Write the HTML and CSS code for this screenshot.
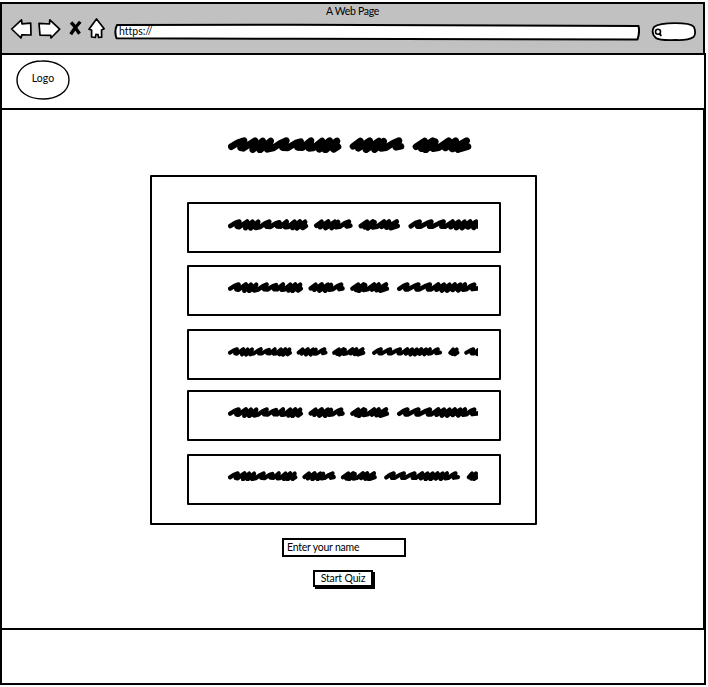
FILE: index.html
```html
<!DOCTYPE html>
<html lang="en">
<head>
<meta charset="utf-8">
<title>A Web Page</title>
<link rel="stylesheet" href="styles.css">
</head>
<body>
<svg class="defs" aria-hidden="true">
  <defs>
    <g id="scribble" fill="none" stroke="#000" stroke-width="20" stroke-linecap="round" stroke-linejoin="round">
      <path d="M10 29 L30 17 L48 11 L38 32 L46 34 L81 11 L74 38 L104 12 L96 39 L128 12 L118 37 L136 33 L157 19 L175 11 L164 32 L179 33 L204 18 L218 14 L209 31 L223 32 L249 11 L243 34 L256 33 L282 12 L274 37 L305 11 L292 39 L327 12 L317 37 L330 29"/>
      <path d="M375 28 L397 12 L391 34 L425 11 L414 38 L453 12 L440 38 L467 13 L459 34 L474 32 L496 18 L513 11 L504 31 L519 28"/>
      <path d="M564 29 L590 12 L580 35 L614 11 L593 39 L622 14 L615 35 L632 32 L662 11 L652 33 L683 11 L673 36 L716 11 L690 38 L720 29"/>
      <path d="M776 30 L796 17 L813 11 L804 32 L817 32 L845 17 L863 11 L854 32 L868 32 L897 17 L915 11 L906 32 L921 32 L953 11 L945 34 L979 12 L969 38 L1004 12 L993 38 L1028 11 L1018 35 L1053 12 L1043 37 L1074 11 L1066 34 L1080 32 L1101 17 L1116 11 L1107 31 L1128 28"/>
      <path d="M1181 29 L1197 12 L1193 35 L1216 12 L1206 37 L1220 28"/>
      <path d="M1266 29 L1288 17 L1304 11 L1295 32 L1306 33 L1334 12 L1325 36 L1352 11 L1344 34 L1365 20"/>
    </g>
  </defs>
</svg>
<div class="browser">
  <header class="toolbar">
    <div class="title">A Web Page</div>
    <div class="controls">
      <svg class="nav-icons" viewBox="0 0 98 24" fill="#fff" stroke="#000" stroke-width="1.7" stroke-linejoin="round">
        <path d="M1.7 12 L11.5 2.8 L12 6.8 L20.7 6.1 L21 18 L11.8 17.8 L11 21 Z"/>
        <path d="M29 6.3 L39.5 7 L39.8 2.8 L49.7 12.2 L41 21 L40.8 18.3 L30 18.2 Z"/>
        <path d="M61 5.5 L63.5 8 L69.5 16.8 M70.3 4.8 L65 11 L60.7 17.3" fill="none" stroke-width="3.3"/>
        <path d="M86.5 2 L94.2 11.7 L91.5 13 L91.7 20.2 L88.6 20.5 L88 17.5 L86 17.4 L85.3 20.5 L81.6 20 L81.6 13 L79 12.2 Z"/>
      </svg>
      <div class="address">
        <svg class="outline" viewBox="0 0 526 18" fill="#fff" stroke="#000" stroke-width="2" stroke-linejoin="round"><path d="M3 2 L180 1.7 L524.5 3 Q526 9 523.5 16.5 L180 15.8 L2.5 15.2 Q0 8 3 2Z"/></svg>
        <span class="url">https://</span>
      </div>
      <svg class="search" viewBox="0 0 46 20" fill="#fff" stroke="#000" stroke-width="1.8"><path d="M3 5 Q8 1.2 24 1.2 Q40 1.2 43 5 Q45.5 12 42.5 15 Q37 18.5 25 18 Q8 18.5 5 16 Q-.5 11 3 5Z"/><circle cx="7" cy="9.7" r="2.5" stroke-width="1.6"/><path d="M8.5 11.4 L10.2 14" stroke-width="2"/></svg>
    </div>
  </header>
  <nav class="site-header">
    <div class="logo"><svg class="outline" viewBox="0 0 54 40" fill="#fff" stroke="#000" stroke-width="1.4"><path d="M26 1 C39 .7 53 7 53 20 C53 33 39 39 27 39 C13 39 .8 32 1 20 C1 8 13 1 26 1Z"/></svg><span>Logo</span></div>
  </nav>
  <main>
    <svg class="heading" viewBox="0 0 735 48" preserveAspectRatio="none"><use href="#scribble"/></svg>
    <section class="panel">
      <div class="row r1"><svg class="line" viewBox="0 0 1061 48" preserveAspectRatio="none"><use href="#scribble"/></svg></div>
      <div class="row r2"><svg class="line" viewBox="0 0 1133 48" preserveAspectRatio="none"><use href="#scribble"/></svg></div>
      <div class="row r3"><svg class="line" viewBox="0 0 1329 48" preserveAspectRatio="none"><use href="#scribble"/></svg></div>
      <div class="row r4"><svg class="line" viewBox="0 0 1133 48" preserveAspectRatio="none"><use href="#scribble"/></svg></div>
      <div class="row r5"><svg class="line" viewBox="0 0 1226 48" preserveAspectRatio="none"><use href="#scribble"/></svg></div>
    </section>
    <div class="field"><span>Enter your name</span></div>
    <div class="button"><span>Start Quiz</span></div>
  </main>
  <footer></footer>
</div>
</body>
</html>
```
FILE: styles.css
```css
* { box-sizing: border-box; }
body {
  margin: 0;
  background: #fff;
  color: #000;
  font: 10.5px/14px Lato, "Open Sans", sans-serif;
  overflow: hidden;
}
.defs { position: absolute; width: 0; height: 0; }
.browser { width: 707px; padding-top: 2px; display: flex; flex-direction: column; }
.toolbar {
  width: 705px;
  height: 51px;
  background: #c1c1c1;
  border: 2px solid #000;
  border-bottom: 0;
}
.title { height: 18px; text-align: center; letter-spacing: -.3px; }
.controls { display: flex; align-items: flex-start; padding-left: 8px; }
.nav-icons { width: 98px; height: 24px; margin-top: -5px; }
.address { position: relative; width: 526px; height: 18px; margin: 1px 0 0 6px; }
.outline { position: absolute; inset: 0; width: 100%; height: 100%; }
.url { position: relative; display: block; padding: 1px 0 0 5px; letter-spacing: 0; font-variant-ligatures: none; }
.search { width: 46px; height: 20px; margin-left: 11px; }
.site-header {
  width: 706px;
  height: 57px;
  border: 2px solid #000;
  padding: 5px 0 0 14px;
}
.logo {
  position: relative;
  width: 54px;
  height: 40px;
  display: flex;
  align-items: center;
  justify-content: center;
}
.logo span { position: relative; top: -2px; }
main {
  width: 706px;
  height: 518px;
  border-left: 2px solid #000;
  border-right: 3px solid #000;
  display: flex;
  flex-direction: column;
  align-items: flex-start;
}
.heading { width: 245px; height: 16px; margin: 27px 0 0 226px; }
.panel {
  width: 387px;
  height: 350px;
  margin: 22px 0 0 148px;
  padding: 25px 0 0 35px;
  border: 2px solid #000;
  border-radius: 1px;
}
.row {
  width: 314px;
  height: 51px;
  border: 2px solid #000;
  border-radius: 1px;
  padding: 15px 0 0 39px;
}
.r2 { margin-top: 12px; }
.r3 { margin-top: 13px; }
.r4 { margin-top: 10px; }
.r5 { margin-top: 13px; }
.line { display: block; width: 250px; height: 11.5px; }
.r2 .line, .r4 .line { height: 11px; }
.r5 .line { height: 10.4px; }
.r3 .line { height: 9.6px; margin-top: 1px; }
.field {
  width: 124px;
  height: 19px;
  margin: 13px 0 0 280px;
  padding: 0 0 0 3px;
  border: 2px solid #000;
}
.field span { letter-spacing: -.22px; }
.button {
  width: 60px;
  height: 17px;
  margin: 13px 0 0 311px;
  border: 2px solid #000;
  box-shadow: 2px 2px 0 #000;
  text-align: center;
  line-height: 13px;
}
.button span { letter-spacing: -.15px; }
footer { width: 706px; height: 57px; border: 2px solid #000; }
```
